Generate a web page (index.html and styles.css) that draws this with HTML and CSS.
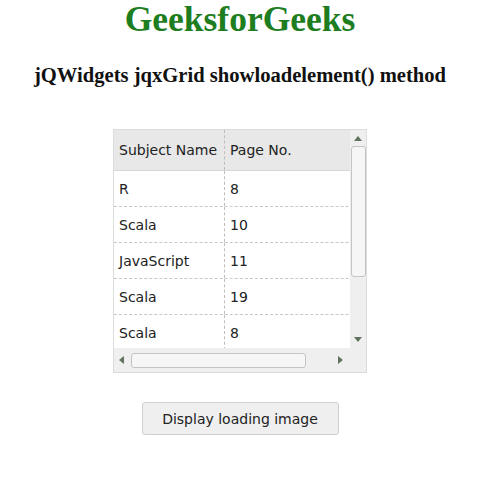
FILE: index.html
```html
<!DOCTYPE html>
<html>
<head>
<meta charset="utf-8">
<link rel="stylesheet" href="styles.css">
</head>
<body>
<div class="page">
  <h1 class="title">GeeksforGeeks</h1>
  <h3 class="subtitle">jQWidgets jqxGrid showloadelement() method</h3>
  <div class="grid">
    <div class="main">
      <div class="row head">
        <div class="cell c1">Subject Name</div>
        <div class="cell c2">Page No.</div>
      </div>
      <div class="row"><div class="cell c1">R</div><div class="cell c2">8</div></div>
      <div class="row"><div class="cell c1">Scala</div><div class="cell c2">10</div></div>
      <div class="row"><div class="cell c1">JavaScript</div><div class="cell c2">11</div></div>
      <div class="row"><div class="cell c1">Scala</div><div class="cell c2">19</div></div>
      <div class="row"><div class="cell c1">Scala</div><div class="cell c2">8</div></div>
    </div>
    <div class="vscroll">
      <span class="arrow up"></span>
      <div class="vtrack"><div class="vthumb"></div></div>
      <span class="arrow down"></span>
    </div>
    <div class="hscroll">
      <span class="arrow left"></span>
      <div class="htrack"><div class="hthumb"></div></div>
      <span class="arrow right"></span>
    </div>
    <div class="corner"></div>
  </div>
  <button class="btn">Display loading image</button>
</div>
</body>
</html>
```

FILE: styles.css
```css
html, body {
  margin: 0;
  padding: 0;
  background: #ffffff;
}
.page {
  width: 480px;
  display: flex;
  flex-direction: column;
  align-items: center;
}
.title {
  margin: 0;
  font-family: "Liberation Serif", "Times New Roman", serif;
  font-size: 35.5px;
  font-weight: bold;
  color: #1e7d1e;
  line-height: 38px;
}
.subtitle {
  margin: 25px 0 0 0;
  font-family: "Liberation Serif", "Times New Roman", serif;
  font-size: 20.6px;
  font-weight: bold;
  color: #111;
  line-height: 24px;
}
.grid {
  margin-top: 42px;
  width: 252px;
  height: 242px;
  border: 1px solid #dcdcdc;
  display: grid;
  grid-template-columns: 236px 16px;
  grid-template-rows: 218px 24px;
  overflow: hidden;
  font-family: "DejaVu Sans", Verdana, sans-serif;
  font-size: 14px;
  color: #222;
}
.main {
  overflow: hidden;
  background: #fff;
}
.row {
  display: flex;
  height: 35px;
  border-bottom: 1px dashed #c8c8c8;
  width: 300px;
}
.row.head {
  height: 40px;
  background: #e8e8e8;
  border-bottom: 1px solid #d6d6d6;
}
.cell {
  display: flex;
  align-items: center;
  padding-left: 5px;
  box-sizing: border-box;
}
.c1 {
  width: 111px;
  border-right: 1px dashed #bdbdbd;
}
.c2 {
  flex: 1;
}
.vscroll {
  background: #efefef;
  display: flex;
  flex-direction: column;
  align-items: center;
}
.vtrack {
  flex: 1;
  width: 15px;
}
.vthumb {
  height: 131px;
  box-sizing: border-box;
  border: 1px solid #c4c4c4;
  border-radius: 3px;
  background: #f6f6f6;
}
.hscroll {
  background: #efefef;
  display: flex;
  align-items: center;
}
.htrack {
  flex: 1;
  height: 15px;
}
.hthumb {
  margin-left: 1px;
  width: 175px;
  height: 15px;
  box-sizing: border-box;
  border: 1px solid #c4c4c4;
  border-radius: 3px;
  background: #f6f6f6;
}
.corner {
  background: #efefef;
}
.arrow {
  width: 0;
  height: 0;
  display: block;
}
.arrow.up {
  margin: 6px 0 5px;
  border-left: 4px solid transparent;
  border-right: 4px solid transparent;
  border-bottom: 5px solid #5f735f;
}
.arrow.down {
  margin: 5px 0 6px;
  border-left: 4px solid transparent;
  border-right: 4px solid transparent;
  border-top: 5px solid #5f735f;
}
.arrow.left {
  margin: 0 6px 0 5px;
  border-top: 4px solid transparent;
  border-bottom: 4px solid transparent;
  border-right: 5px solid #5f735f;
}
.arrow.right {
  margin: 0 7px 0 5px;
  border-top: 4px solid transparent;
  border-bottom: 4px solid transparent;
  border-left: 5px solid #5f735f;
}
.btn {
  margin-top: 29px;
  width: 197px;
  height: 33px;
  border: 1px solid #cfcfcf;
  border-radius: 3px;
  background: #efefef;
  font-family: "DejaVu Sans", Verdana, sans-serif;
  font-size: 14px;
  color: #222;
  padding: 0;
}
```
